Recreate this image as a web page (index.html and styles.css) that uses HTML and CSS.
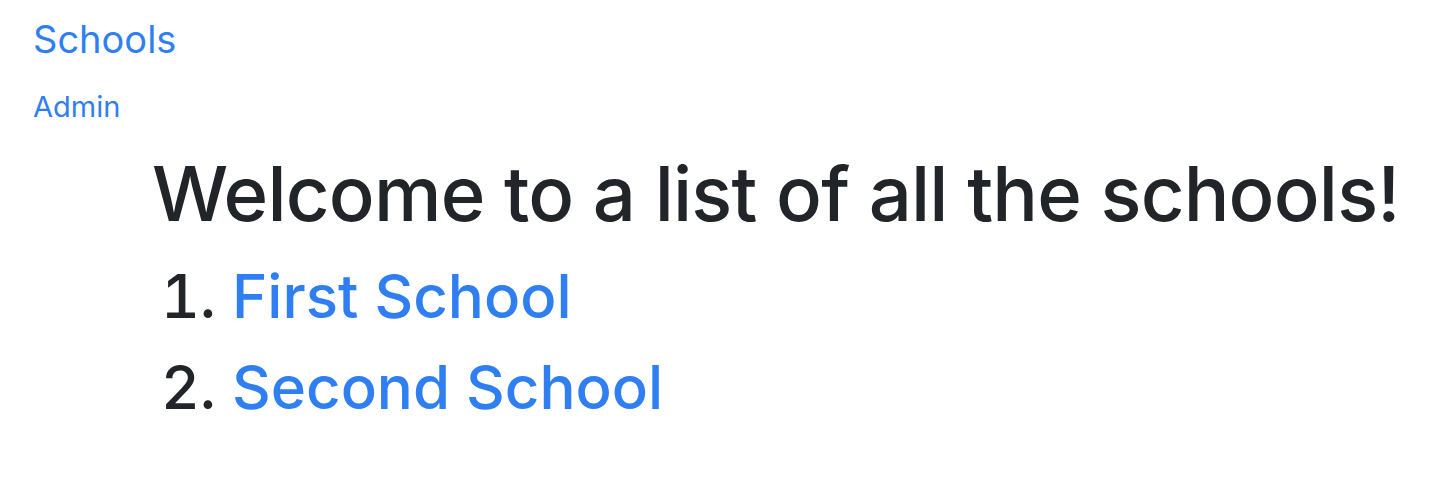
FILE: index.html
```html
<!DOCTYPE html>
<html>
<head>
<meta charset="utf-8">
<link rel="stylesheet" href="styles.css">
</head>
<body>
<nav class="nav">
  <a class="brand" href="#">Schools</a>
  <a class="nav-link" href="#">Admin</a>
</nav>
<main class="main">
  <h1 class="title">Welcome to a list of all the schools!</h1>
  <ol class="schools">
    <li class="school"><a href="#">First School</a></li>
    <li class="school"><a href="#">Second School</a></li>
  </ol>
</main>
</body>
</html>
```

FILE: styles.css
```css
html, body {
  margin: 0;
  padding: 0;
  background: #fff;
}
body {
  font-family: Inter, "Noto Sans", sans-serif;
  color: #212529;
}
a {
  color: #2f7ff2;
  text-decoration: none;
}
.nav {
  display: flex;
  flex-direction: column;
  align-items: flex-start;
  padding: 14px 0 0 33px;
}
.brand {
  font-size: 38px;
  line-height: 50px;
}
.nav-link {
  font-size: 29px;
  line-height: 40px;
  margin-top: 23px;
}
.main {
  padding-left: 152px;
  padding-top: 20px;
}
.title {
  margin: 0 0 12px;
  font-size: 76px;
  font-weight: 500;
  line-height: 92px;
  letter-spacing: -0.8px;
}
.schools {
  margin: 0;
  padding-left: 80px;
}
.school {
  font-size: 60px;
  font-weight: 500;
  line-height: 91px;
}
```
